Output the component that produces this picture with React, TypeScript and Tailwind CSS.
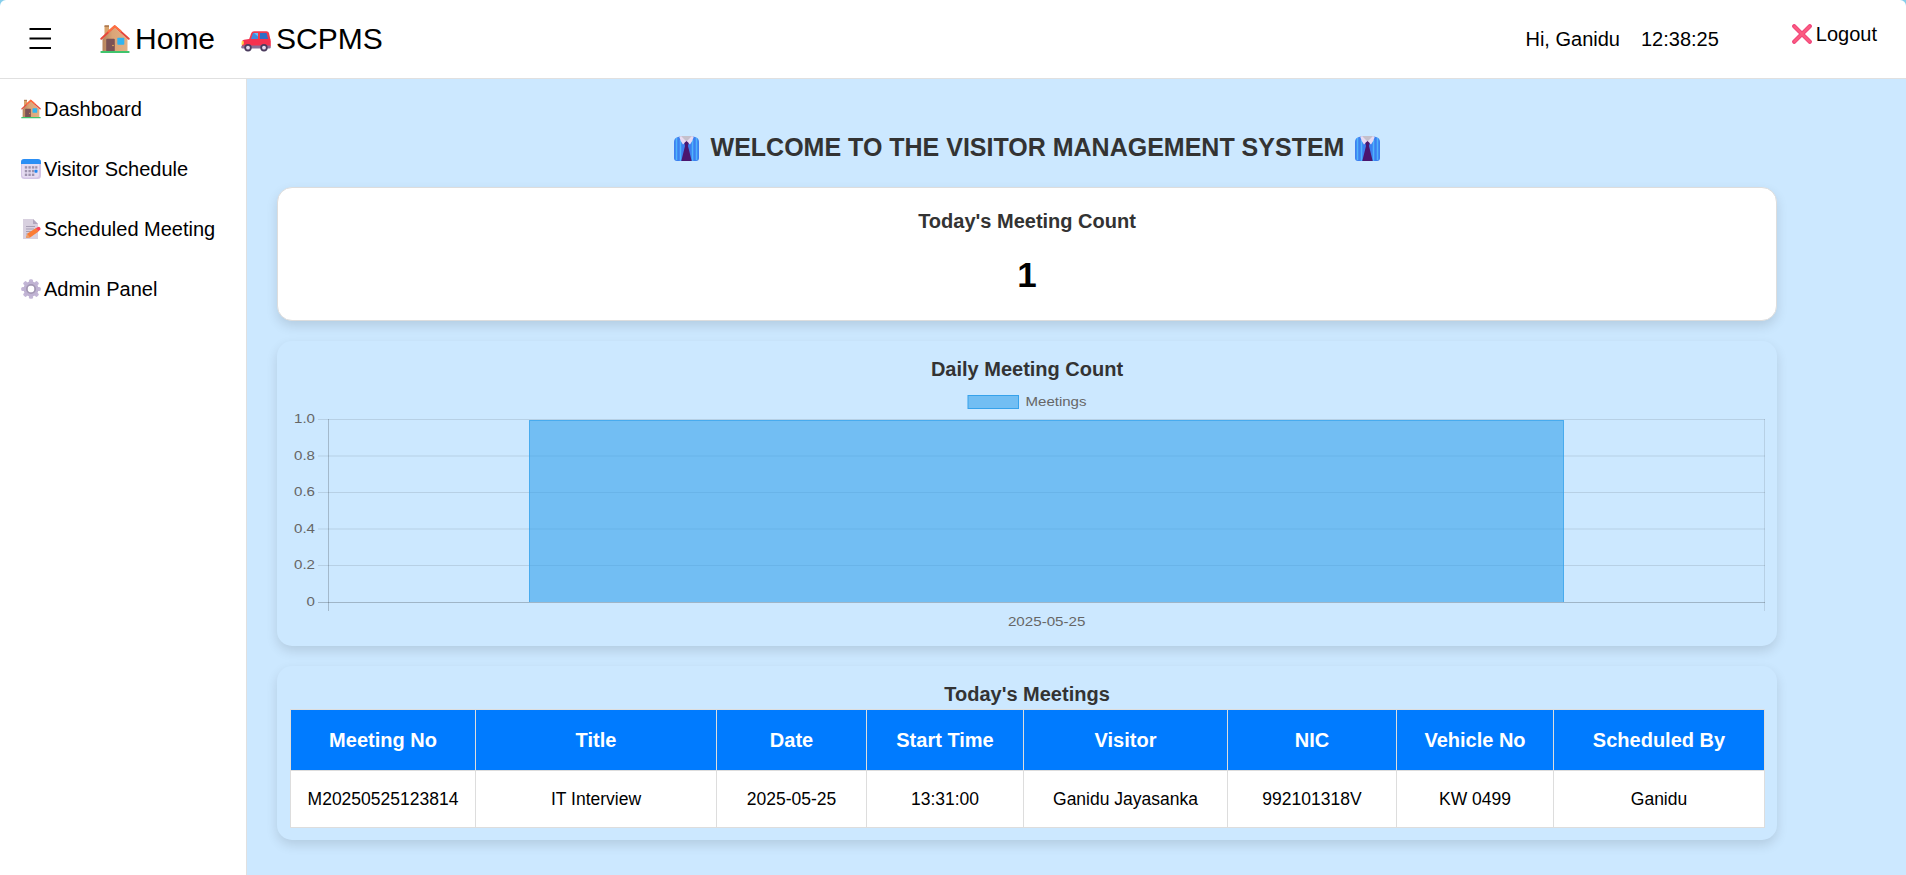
import React from "react";

function House({ className }: { className: string }) {
  return (
    <svg viewBox="0 0 30 30" className={className}>
      <defs>
        <linearGradient id="wall" x1="0" x2="1">
          <stop offset="0" stopColor="#b5835c" />
          <stop offset="0.4" stopColor="#dba577" />
          <stop offset="1" stopColor="#e2b085" />
        </linearGradient>
      </defs>
      <rect x="4.500" y="2" width="4.500" height="12" fill="#d9a46c" />
      <rect x="4.500" y="1.200" width="4.500" height="1.800" fill="#b07b50" />
      <path d="M2.500 27.500V15L14.500 3.500 27.500 15v12.500z" fill="url(#wall)" />
      <path d="M1.300 14.800 14.700 2.200 28.700 14.800" fill="none" stroke="#e5483b" strokeWidth="2" strokeLinecap="round" strokeLinejoin="round" />
      <path d="M8.500 7.500 14.700 2.200 20.500 7" fill="none" stroke="#ff7040" strokeWidth="2" strokeLinecap="round" />
      <rect x="6.200" y="14.800" width="8.600" height="12.700" rx="1" fill="#7b5255" />
      <circle cx="13" cy="21.500" r="0.800" fill="#f0b050" />
      <rect x="17.300" y="13.800" width="7" height="7" rx="0.800" fill="#31b4f0" />
      <rect x="0.300" y="27" width="29.400" height="2" rx="1" fill="#3fc46c" />
    </svg>
  );
}

function Car({ className }: { className: string }) {
  return (
    <svg viewBox="0 0 30 30" className={className}>
      <path d="M8 15.500 10.300 9Q11 7.200 13 7.200h12.500q2 0 2.500 1.800L29.500 16z" fill="#f03a50" />
      <path d="M9.800 15.500 12 9h5v6.500z" fill="#3f8be0" />
      <path d="M19 9h6.500l1.700 6.500H19z" fill="#2f6fc6" />
      <path d="M13 9h4v3.500z" fill="#63c5f8" />
      <path d="M1 22.500V18q0-1.800 2-2.200l5-.800h20q1.800 0 1.800 2v5.500z" fill="#f5314f" />
      <rect x="0.300" y="21.500" width="29.400" height="3" rx="1.200" fill="#8a6e96" />
      <path d="M0.800 17h1.700q.9 2-.2 3.800H.4z" fill="#ffd84a" />
      <circle cx="7" cy="23.700" r="3.700" fill="#4b3c5e" />
      <circle cx="7" cy="23.700" r="1.900" fill="#e6dcf0" />
      <circle cx="23" cy="23.700" r="3.700" fill="#4b3c5e" />
      <circle cx="23" cy="23.700" r="1.900" fill="#e6dcf0" />
    </svg>
  );
}

function Calendar({ className }: { className: string }) {
  return (
    <svg viewBox="0 0 20 20" className={className}>
      <rect width="20" height="20" rx="3.500" fill="#d3c5e6" />
      <path d="M1 5h17v10q0 3.500-3 3.500H4q-3 0-3-3z" fill="#e6dcf2" />
      <path d="M0 5V3.200Q0 0 3.200 0h13.600Q20 0 20 3.200V5z" fill="#2b8ff5" />
      <g fill="#9d93ae">
        <rect x="3.800" y="7.200" width="2.400" height="2.400" /><rect x="7.400" y="7.200" width="2.400" height="2.400" /><rect x="10.900" y="7.200" width="2.400" height="2.400" /><rect x="14.200" y="7.200" width="2.200" height="2.400" />
        <rect x="3.800" y="10.900" width="2.400" height="2.400" /><rect x="7.400" y="10.900" width="2.400" height="2.400" /><rect x="10.900" y="10.900" width="2.400" height="2.400" />
        <rect x="3.800" y="14.600" width="2.400" height="2.400" /><rect x="7.400" y="14.600" width="2.400" height="2.400" /><rect x="10.900" y="14.600" width="2.400" height="2.400" />
      </g>
      <rect x="13.500" y="10.700" width="3" height="3" rx="0.800" fill="#2388f0" />
    </svg>
  );
}

function Memo({ className }: { className: string }) {
  return (
    <svg viewBox="0 0 20 20" className={className}>
      <path d="M2 0h10l5 5v15H2z" fill="#d8d0df" />
      <path d="M12 0l5 5h-5z" fill="#b1a6bd" />
      <path d="M5 7.500h9M5 10h8M5 12.500h6M5 15h3" stroke="#a79fb4" strokeWidth="1" />
      <path d="M5 19l1.200-4.300L15 9l2.600 3.400-8.500 6z" fill="#fb7c35" />
      <path d="M5 19l1.200-4.300 2.900 3.700z" fill="#e8a070" />
      <path d="M14.800 9.200 17 7.900q1.200-.5 2 .5t.4 2L17.500 12.300z" fill="#f9435a" />
    </svg>
  );
}

function Gear({ className }: { className: string }) {
  const teeth = [0, 45, 90, 135, 180, 225, 270, 315];
  return (
    <svg viewBox="0 0 20 20" className={className}>
      {teeth.map((a) => (
        <rect key={a} x="7.900" y="0.200" width="4.200" height="5" rx="1.500" fill="#c3b6d6" transform={`rotate(${a} 10 10)`} />
      ))}
      <circle cx="10" cy="10" r="5.500" fill="none" stroke="#bfb2d2" strokeWidth="4" />
      <circle cx="10" cy="10" r="4.200" fill="none" stroke="#a297b2" strokeWidth="1.600" />
    </svg>
  );
}

function Cross({ className }: { className: string }) {
  return (
    <svg viewBox="0 0 20 20" className={className}>
      <path d="M2.200 2.200 17.800 17.800M17.800 2.200 2.200 17.800" stroke="#f0477c" strokeWidth="4.200" strokeLinecap="round" />
      <path d="M2.500 2.500l15 15M17.500 2.500l-15 15" stroke="#fc5c80" strokeWidth="2.200" strokeLinecap="round" />
    </svg>
  );
}

function Necktie({ className }: { className: string }) {
  return (
    <svg viewBox="0 0 25 25" className={className}>
      <path d="M0 6Q0 2 4 1l4-1h9l4 1q4 1 4 5v16q0 3-3 3H3q-3 0-3-3z" fill="#3c80f0" />
      <path d="M2.500 2v22M6.500 4v21M18.500 4v21M22.500 2v22" stroke="#4fb4fb" strokeWidth="1.500" />
      <path d="M6 0h13l-6.500 6.500z" fill="#c5c0cc" />
      <path d="M5.300 1 7 0l5.500 5.500L9 8.500Q6.500 5.500 5.300 1zM19.700 1 18 0l-5.500 5.500L16 8.500q2.500-3 3.700-7.500z" fill="#e8dbf2" />
      <path d="M10.300 7 12.500 5l2.200 2-.7 3L17.700 25H7.300L11 10z" fill="#4b166e" />
    </svg>
  );
}

const menu = [
  { label: "Dashboard", Icon: House },
  { label: "Visitor Schedule", Icon: Calendar },
  { label: "Scheduled Meeting", Icon: Memo },
  { label: "Admin Panel", Icon: Gear },
];

const columns = [
  { head: "Meeting No", value: "M20250525123814", width: "w-[185px]" },
  { head: "Title", value: "IT Interview", width: "w-[241px]" },
  { head: "Date", value: "2025-05-25", width: "w-[150px]" },
  { head: "Start Time", value: "13:31:00", width: "w-[157px]" },
  { head: "Visitor", value: "Ganidu Jayasanka", width: "w-[204px]" },
  { head: "NIC", value: "992101318V", width: "w-[169px]" },
  { head: "Vehicle No", value: "KW 0499", width: "w-[157px]" },
  { head: "Scheduled By", value: "Ganidu", width: "w-[211px]" },
];

const ticks = [
  { label: "1.0", y: 28.5 },
  { label: "0.8", y: 65 },
  { label: "0.6", y: 101.5 },
  { label: "0.4", y: 138 },
  { label: "0.2", y: 174.5 },
  { label: "0", y: 211.5 },
];

function Chart() {
  return (
    <svg width="1476" height="245" viewBox="0 0 1476 245" className="block" fontFamily="Liberation Sans, Arial, sans-serif" fontSize="13.5">
      {ticks.map((t, i) => (
        <g key={t.label}>
          <path d={`M29 ${t.y}H1476`} stroke={i === 5 ? "rgba(0,0,0,0.22)" : "rgba(0,0,0,0.1)"} />
          <text x="26" y={t.y + 3.8} textAnchor="end" fill="#666" textLength={t.label === "0" ? 8.4 : 21} lengthAdjust="spacingAndGlyphs">{t.label}</text>
        </g>
      ))}
      <path d="M39.500 28V220" stroke="rgba(0,0,0,0.2)" />
      <path d="M1475.500 28V220" stroke="rgba(0,0,0,0.1)" />
      <rect x="240" y="29" width="1035" height="182" fill="rgba(54,162,235,0.6)" />
      <path d="M240.500 211V29.500H1274.500V211" fill="none" stroke="rgba(54,162,235,0.7)" />
      <rect x="679" y="4.500" width="50.500" height="13" fill="rgba(54,162,235,0.6)" stroke="#36a2eb" />
      <text x="736.500" y="14.500" fill="#666" textLength="61" lengthAdjust="spacingAndGlyphs">Meetings</text>
      <text x="757.700" y="235" textAnchor="middle" fill="#666" textLength="77.500" lengthAdjust="spacingAndGlyphs">2025-05-25</text>
    </svg>
  );
}

export default function App() {
  return (
    <div className="flex h-[875px] w-[1906px] flex-col overflow-hidden bg-[#87ceeb] font-['Liberation_Sans',Arial,sans-serif] text-black">
      <header className="flex h-[79px] shrink-0 items-center rounded-t-[6px] border-b border-[#e0e0e0] bg-white">
        <svg viewBox="0 0 22 22" className="ml-[29px] size-[22px]">
          <path d="M0.500 1h21.500M0.500 10.500h21.500M0.500 20h21.500" stroke="#000" strokeWidth="2" />
        </svg>
        <div className="ml-[49px] flex items-center text-[30px]">
          <House className="size-[30px]" />
          <span className="ml-[5px] pb-px leading-[34px]">Home</span>
          <Car className="ml-[26px] size-[30px]" />
          <span className="ml-[5px] pb-px leading-[34px]">SCPMS</span>
        </div>
        <div className="ml-auto flex items-center text-[20px]">
          <span>Hi, Ganidu</span>
          <span className="ml-[21px]">12:38:25</span>
          <span className="mr-[29px] mb-[10px] ml-[73px] flex items-center">
            <Cross className="mr-1 size-5" />
            Logout
          </span>
        </div>
      </header>
      <div className="flex min-h-0 flex-1">
        <nav className="flex w-[247px] shrink-0 flex-col border-r border-[#e0e0e0] bg-white">
          {menu.map(({ label, Icon }) => (
            <a key={label} className="flex h-[60px] items-center pl-[21px] text-[20px]">
              <Icon className="mr-[3px] size-5" />
              {label}
            </a>
          ))}
        </nav>
        <main className="flex-1 bg-[#cce8ff] pl-[30px]">
          <div className="flex w-[1500px] flex-col items-center text-[#333]">
            <h1 className="mt-[55px] flex h-[28px] items-center text-[25px] font-bold">
              <Necktie className="mr-3 size-[25px]" />
              <span>WELCOME TO THE VISITOR MANAGEMENT SYSTEM</span>
              <Necktie className="ml-[11px] size-[25px]" />
            </h1>
            <section className="mt-[25px] flex h-[134px] w-full flex-col items-center rounded-[15px] border border-[#ddd] bg-white shadow-[0_5px_12px_rgba(0,0,0,0.12)]">
              <h2 className="mt-[22px] text-[20px] leading-[23px] font-bold">Today's Meeting Count</h2>
              <p className="mt-[22px] text-[35px] leading-[40px] font-bold text-black">1</p>
            </section>
            <section className="mt-5 flex h-[305px] w-full flex-col items-center rounded-[15px] bg-[#cce8ff] shadow-[0_5px_12px_rgba(0,0,0,0.12)]">
              <h2 className="mt-[17px] mb-[10px] text-[20px] leading-[23px] font-bold">Daily Meeting Count</h2>
              <Chart />
            </section>
            <section className="mt-5 flex h-[174px] w-full flex-col items-center rounded-[15px] bg-[#cce8ff] shadow-[0_5px_12px_rgba(0,0,0,0.12)]">
              <h2 className="mt-[17px] mb-[3px] text-[20px] leading-[23px] font-bold">Today's Meetings</h2>
              <table className="w-[1475px] table-fixed border-collapse text-center text-black">
                <thead>
                  <tr className="h-[61px] bg-[#007bff] text-[20px] text-white">
                    {columns.map((c) => (
                      <th key={c.head} className={`${c.width} border border-[#ddd] p-0 pl-px font-bold`}>{c.head}</th>
                    ))}
                  </tr>
                </thead>
                <tbody>
                  <tr className="h-[57px] bg-white text-[17.5px]">
                    {columns.map((c) => (
                      <td key={c.head} className="border border-[#ddd] p-0 pl-px">{c.value}</td>
                    ))}
                  </tr>
                </tbody>
              </table>
            </section>
          </div>
        </main>
      </div>
    </div>
  );
}
